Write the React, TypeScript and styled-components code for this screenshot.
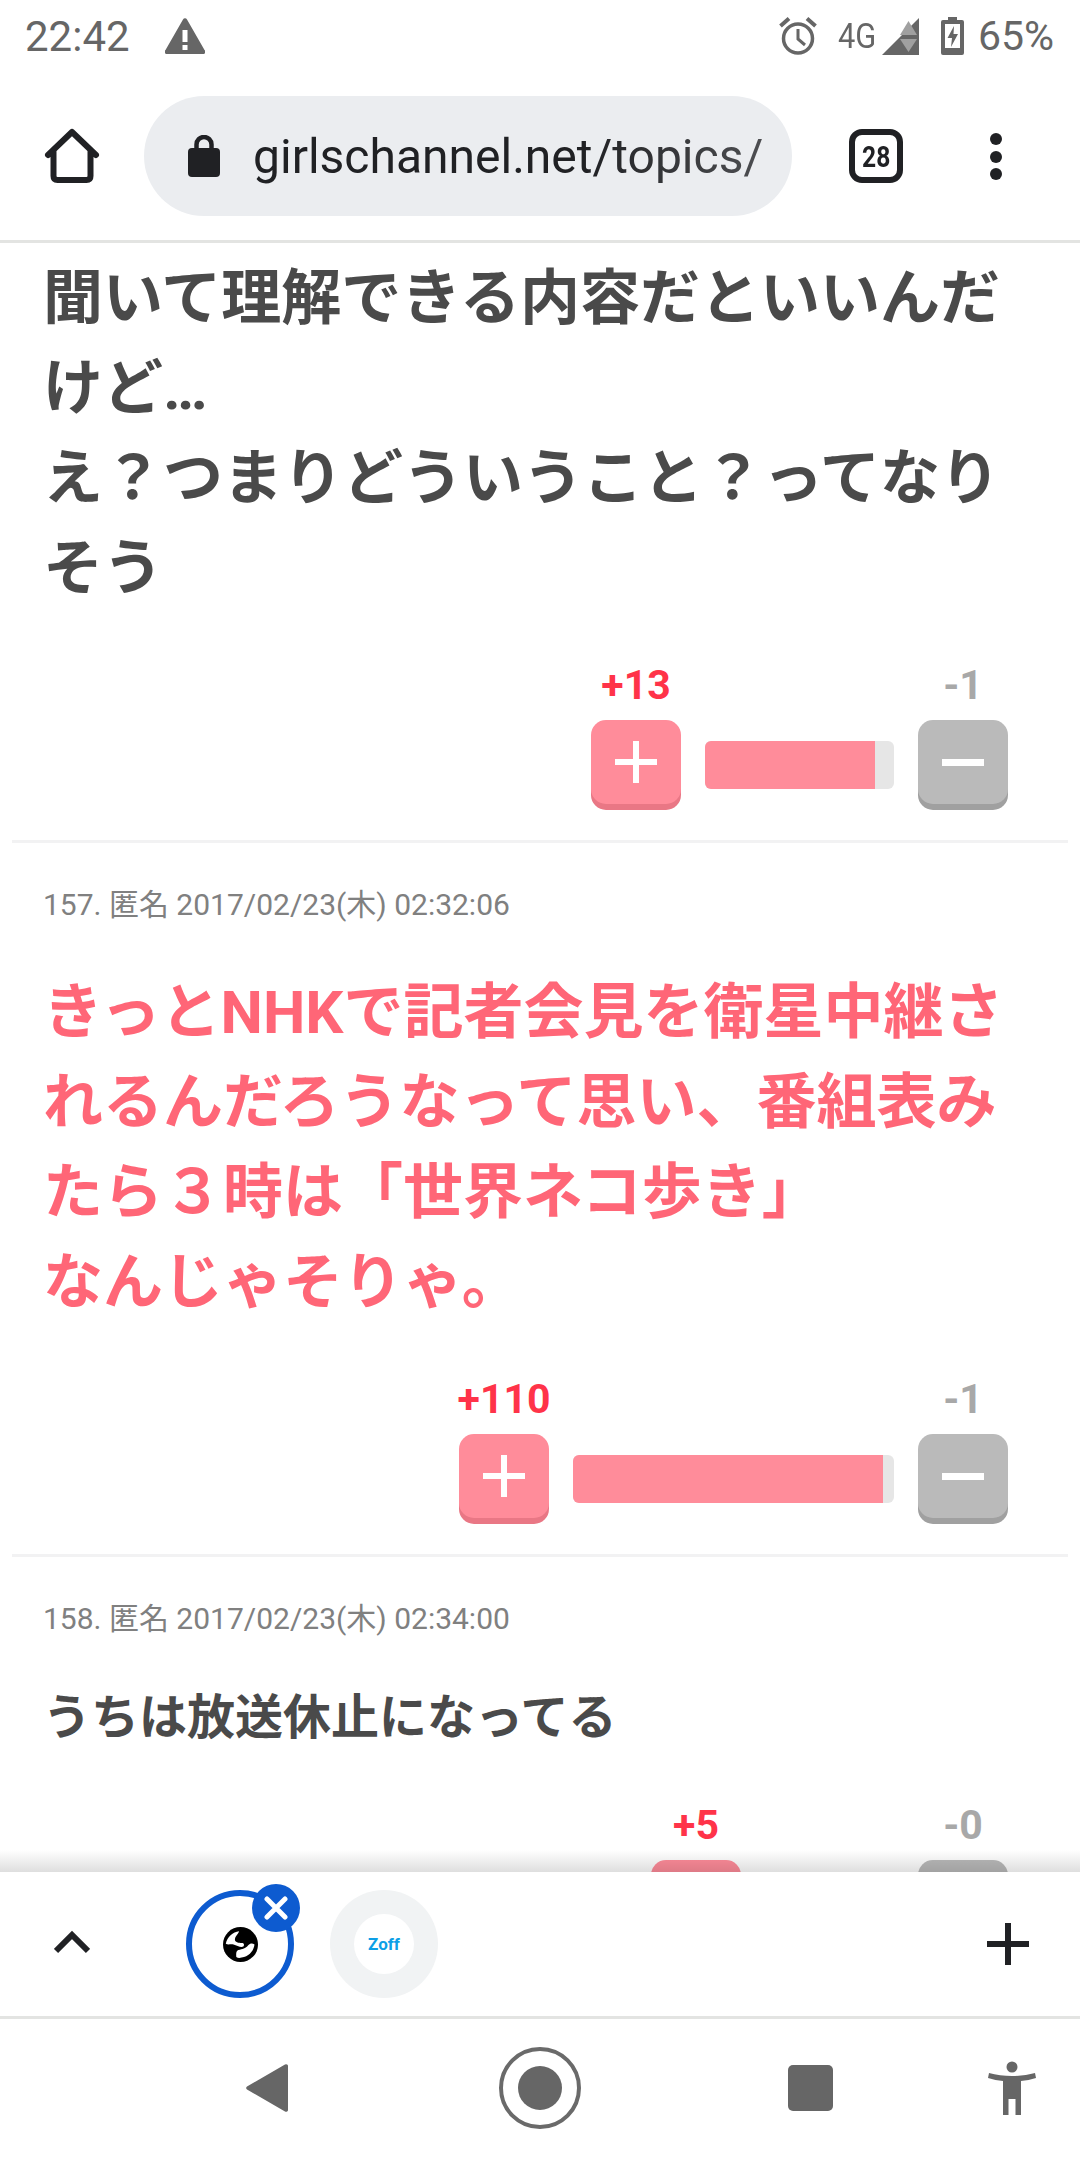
import React from "react";
import styled, { createGlobalStyle } from "styled-components";

const GlobalStyle = createGlobalStyle`
  html, body {
    margin: 0;
    padding: 0;
    background: #fff;
  }
  * {
    box-sizing: border-box;
  }
`;

const JP = `Roboto, "Noto Sans CJK JP", sans-serif`;

const StatusIcons = () => (
  <StatusRight>
    <svg width="38" height="40" viewBox="0 0 38 40" fill="none" stroke="#666">
      <circle cx="19" cy="22.500" r="14.500" strokeWidth="3.500" />
      <path d="M19 13v10l7 6" strokeWidth="3" />
      <path d="M1.500 10 10 2.500M36.500 10 28 2.500" strokeWidth="4" />
    </svg>
    <Net>4G</Net>
    <svg width="37" height="37" viewBox="0 0 37 37">
      <path d="M37 0V37H0Z" fill="#666" />
      <path d="M26.500 3 35 17H18Z" fill="#a0a0a0" />
      <path d="M18 21H35L26.500 34Z" fill="#a0a0a0" />
    </svg>
    <BatteryIcon width="23" height="38" viewBox="0 0 23 38">
      <path d="M7 0h9v3h5a2 2 0 0 1 2 2v31a2 2 0 0 1-2 2H2a2 2 0 0 1-2-2V5a2 2 0 0 1 2-2h5z" fill="#666" />
      <path d="M4 7h15v24H4z" fill="#fff" />
      <path d="M13 9 6.500 21H11l-1 9 7-13h-4.500z" fill="#666" />
    </BatteryIcon>
    <Battery>65%</Battery>
  </StatusRight>
);

const PlusGlyph = () => (
  <svg width="42" height="42" viewBox="0 0 42 42">
    <path d="M18 0h6v18h18v6H24v18h-6V24H0v-6h18z" fill="#fff" />
  </svg>
);

const MinusGlyph = () => (
  <svg width="42" height="42" viewBox="0 0 42 42">
    <path d="M0 18h42v7H0z" fill="#fff" />
  </svg>
);

interface VotesProps {
  plus: number;
  minus: number;
  barWidth: number;
  fill: number;
}

const Votes: React.FC<VotesProps> = ({ plus, minus, barWidth, fill }) => (
  <VoteRow>
    <VoteCol>
      <Count $plus>+{plus}</Count>
      <VoteButton $plus>
        <PlusGlyph />
      </VoteButton>
    </VoteCol>
    <Bar $width={barWidth}>
      <BarFill style={{ width: `${fill}%` }} />
    </Bar>
    <VoteCol>
      <Count>-{minus}</Count>
      <VoteButton>
        <MinusGlyph />
      </VoteButton>
    </VoteCol>
  </VoteRow>
);

export default function App() {
  return (
    <Page>
      <GlobalStyle />
      <StatusBar>
        <StatusLeft>
          <Time>22:42</Time>
          <svg width="40" height="36" viewBox="0 0 40 36">
            <path d="M18 1.500a2.300 2.300 0 0 1 4 0L39.500 32a2.300 2.300 0 0 1-2 4h-35a2.300 2.300 0 0 1-2-4Z" fill="#666" />
            <path d="M17.500 12h5v12h-5zM17.500 27h5v5h-5z" fill="#fff" />
          </svg>
        </StatusLeft>
        <StatusIcons />
      </StatusBar>

      <Toolbar>
        <svg width="56" height="58" viewBox="0 0 56 58" fill="none" stroke="#202124" strokeWidth="6" strokeLinecap="round" strokeLinejoin="round">
          <path d="M4 28 28 5l24 23M9.500 24v25q0 4 4 4h29q4 0 4-4V24" />
        </svg>
        <UrlPill>
          <svg width="32" height="42" viewBox="0 0 32 42">
            <path d="M8.500 15V9.500a7.500 7.500 0 0 1 15 0V15" fill="none" stroke="#202124" strokeWidth="4.500" />
            <rect x="0" y="13" width="32" height="29" rx="4" fill="#202124" />
          </svg>
          <UrlText>girlschannel.net/topics/</UrlText>
        </UrlPill>
        <TabCount>
          <span>28</span>
        </TabCount>
        <MenuDots>
          <i />
          <i />
          <i />
        </MenuDots>
      </Toolbar>

      <Content>
        <Comment $first>
          <Body>
            聞いて理解できる内容だといいんだけど…
            <br />
            え？つまりどういうこと？ってなりそう
          </Body>
          <Votes plus={13} minus={1} barWidth={189} fill={90} />
        </Comment>
        <Comment>
          <Meta>157. 匿名 2017/02/23(木) 02:32:06</Meta>
          <Body $hot>
            きっとNHKで記者会見を衛星中継されるんだろうなって思い、番組表みたら３時は「世界ネコ歩き」
            <br />
            なんじゃそりゃ。
          </Body>
          <Votes plus={110} minus={1} barWidth={321} fill={96.5} />
        </Comment>
        <Comment>
          <Meta>158. 匿名 2017/02/23(木) 02:34:00</Meta>
          <Body $small>うちは放送休止になってる</Body>
          <Votes plus={5} minus={0} barWidth={129} fill={100} />
        </Comment>
      </Content>

      <TabStrip>
        <svg width="36" height="24" viewBox="0 0 36 24" fill="none" stroke="#202124" strokeWidth="6">
          <path d="M2 21 18 5l16 16" />
        </svg>
        <ActiveTab>
          <svg width="35" height="35" viewBox="0 0 100 100">
            <circle cx="50" cy="50" r="50" fill="#000" />
            <path
              d="M8 48C12 28 28 14 46 12 44 20 34 26 34 36 34 44 44 46 54 46 60 46 62 52 58 56 50 60 40 52 30 50 22 48 14 52 8 48Z"
              fill="#fff"
            />
            <path
              d="M38 86C38 78 36 70 44 66 56 62 64 62 72 52 78 46 84 46 90 50 88 66 78 80 60 86 52 88 44 90 38 86Z"
              fill="#fff"
            />
          </svg>
          <CloseBadge>
            <svg width="24" height="24" viewBox="0 0 24 24" fill="none" stroke="#fff" strokeWidth="5" strokeLinecap="round">
              <path d="M3 3l18 18M21 3 3 21" />
            </svg>
          </CloseBadge>
        </ActiveTab>
        <IdleTab>
          <Favicon>Zoff</Favicon>
        </IdleTab>
        <AddTab>
          <svg width="42" height="42" viewBox="0 0 42 42">
            <path d="M18 0h6v18h18v6H24v18h-6V24H0v-6h18z" fill="#202124" />
          </svg>
        </AddTab>
      </TabStrip>

      <NavBar>
        <svg width="42" height="48" viewBox="0 0 42 48">
          <path d="M39 .500a2 2 0 0 1 3 2v43a2 2 0 0 1-3 2L1 25.500a2 2 0 0 1 0-3z" fill="#666" />
        </svg>
        <HomeRing>
          <i />
        </HomeRing>
        <NavSquare />
        <A11yIcon width="48" height="54" viewBox="0 0 48 54">
          <circle cx="24" cy="6" r="5.500" fill="#666" />
          <path
            d="M1 12c7 2 15 3 23 3s16-1 23-3l1 5c-5 1.500-10 2.500-15 3v34h-5.500V38h-7v16H15V20c-5-.5-10-1.500-15-3z"
            fill="#666"
          />
        </A11yIcon>
      </NavBar>
    </Page>
  );
}

const Page = styled.div`
  width: 1080px;
  height: 2160px;
  display: flex;
  flex-direction: column;
  overflow: hidden;
  background: #fff;
  font-family: ${JP};
`;

const StatusBar = styled.div`
  height: 72px;
  padding: 0 26px 0 25px;
  display: flex;
  align-items: center;
  justify-content: space-between;
  color: #666;
`;

const StatusLeft = styled.div`
  display: flex;
  align-items: center;
  gap: 35px;
`;

const Time = styled.span`
  font-size: 42px;
`;

const StatusRight = styled.div`
  display: flex;
  align-items: center;
`;

const Net = styled.span`
  width: 38px;
  margin: 0 6px 0 21px;
  font-size: 35px;
  transform: scaleX(0.88);
  transform-origin: left;
`;

const BatteryIcon = styled.svg`
  margin-left: 22px;
`;

const Battery = styled.span`
  font-size: 41px;
  margin-left: 14px;
`;

const Toolbar = styled.div`
  height: 171px;
  padding: 24px 0 0 44px;
  display: flex;
  align-items: flex-start;
  border-bottom: 3px solid #e3e4e2;

  & > svg {
    margin-top: 31px;
    flex: none;
  }
`;

const UrlPill = styled.div`
  width: 648px;
  height: 120px;
  margin-left: 44px;
  padding-left: 44px;
  border-radius: 60px;
  background: #ebedf0;
  display: flex;
  align-items: center;
  gap: 33px;
  flex: none;

  svg {
    flex: none;
  }
`;

const UrlText = styled.span`
  font-size: 48px;
  color: #202124;
  white-space: nowrap;
  mask-image: linear-gradient(90deg, #000 65%, rgba(0, 0, 0, 0.78) 100%);
`;

const TabCount = styled.div`
  width: 54px;
  height: 54px;
  margin: 33px 0 0 57px;
  border: 6px solid #202124;
  border-radius: 13px;
  display: flex;
  align-items: center;
  justify-content: center;
  font-size: 30px;
  font-weight: 700;
  color: #202124;

  span {
    transform: scaleX(0.82);
  }
`;

const MenuDots = styled.div`
  margin: 37px 0 0 87px;
  height: 47px;
  display: flex;
  flex-direction: column;
  justify-content: space-between;

  i {
    display: block;
    width: 12px;
    height: 12px;
    border-radius: 50%;
    background: #202124;
  }
`;

const Content = styled.div`
  flex: 1;
  min-height: 0;
  overflow: hidden;
  padding-top: 9px;
`;

const Comment = styled.section<{ $first?: boolean }>`
  margin: 0 12px;
  padding: 0 0 30px 31px;
  border-top: ${(p) => (p.$first ? "none" : "3px solid #f2f2f3")};
`;

const Meta = styled.div`
  height: 123px;
  padding-top: 44px;
  font-size: 30px;
  line-height: 36px;
  color: #808080;
`;

const Body = styled.div<{ $hot?: boolean; $small?: boolean }>`
  width: 994px;
  padding-top: 2px;
  font-size: ${(p) => (p.$small ? "48px" : "60px")};
  line-height: ${(p) => (p.$small ? "72px" : "90px")};
  font-weight: 700;
  color: ${(p) => (p.$hot ? "#ff6677" : "#4a4a4a")};
`;

const VoteRow = styled.div`
  display: flex;
  justify-content: flex-end;
  align-items: flex-end;
  gap: 24px;
  margin-top: 52px;
  margin-right: 60px;
`;

const VoteCol = styled.div`
  width: 90px;
  display: flex;
  flex-direction: column;
  align-items: center;
`;

const Count = styled.div<{ $plus?: boolean }>`
  height: 54px;
  font-size: 41px;
  line-height: 38px;
  font-weight: 700;
  white-space: nowrap;
  color: ${(p) => (p.$plus ? "#ff3349" : "#a8a8a8")};
`;

const VoteButton = styled.div<{ $plus?: boolean }>`
  width: 90px;
  height: 84px;
  margin-bottom: 6px;
  border-radius: 15px;
  display: flex;
  align-items: center;
  justify-content: center;
  background: ${(p) => (p.$plus ? "#ff8c9a" : "#bababa")};
  box-shadow: 0 6px 0 ${(p) => (p.$plus ? "#e97785" : "#a0a0a0")};
`;

const Bar = styled.div<{ $width: number }>`
  width: ${(p) => p.$width}px;
  height: 48px;
  margin-bottom: 21px;
  border-radius: 6px;
  overflow: hidden;
  background: #e6e6e6;
`;

const BarFill = styled.div`
  height: 100%;
  background: #ff8c9a;
`;

const TabStrip = styled.div`
  position: relative;
  height: 147px;
  padding: 18px 0 0 54px;
  display: flex;
  align-items: flex-start;
  background: #fff;
  border-bottom: 3px solid #e3e4e2;

  &::before {
    content: "";
    position: absolute;
    left: 0;
    right: 0;
    top: -22px;
    height: 22px;
    background: linear-gradient(rgba(0, 0, 0, 0), rgba(0, 0, 0, 0.13));
  }

  & > svg {
    margin-top: 40px;
    flex: none;
  }
`;

const ActiveTab = styled.div`
  position: relative;
  width: 108px;
  height: 108px;
  margin-left: 96px;
  border: 6px solid #0d5bd0;
  border-radius: 50%;
  display: flex;
  align-items: center;
  justify-content: center;
  flex: none;
`;

const CloseBadge = styled.div`
  position: absolute;
  top: -12px;
  right: -12px;
  width: 48px;
  height: 48px;
  border-radius: 50%;
  background: #0d5bd0;
  display: flex;
  align-items: center;
  justify-content: center;
`;

const IdleTab = styled.div`
  width: 108px;
  height: 108px;
  margin-left: 36px;
  border-radius: 50%;
  background: #f1f3f4;
  display: flex;
  align-items: center;
  justify-content: center;
  flex: none;
`;

const Favicon = styled.div`
  width: 60px;
  height: 60px;
  border-radius: 50%;
  background: #fff;
  display: flex;
  align-items: center;
  justify-content: center;
  font-size: 17px;
  font-weight: 700;
  color: #0d9fe6;
`;

const AddTab = styled.div`
  margin: 33px 0 0 549px;
  height: 42px;
`;

const NavBar = styled.div`
  height: 141px;
  padding: 0 0 4px 246px;
  display: flex;
  align-items: center;
`;

const HomeRing = styled.div`
  width: 82px;
  height: 82px;
  margin-left: 211px;
  border: 4px solid #6a6a6a;
  border-radius: 50%;
  display: flex;
  align-items: center;
  justify-content: center;

  i {
    display: block;
    width: 44px;
    height: 44px;
    border-radius: 50%;
    background: #666;
  }
`;

const NavSquare = styled.div`
  width: 45px;
  height: 46px;
  margin-left: 207px;
  border-radius: 5px;
  background: #666;
`;

const A11yIcon = styled.svg`
  margin-left: 155px;
`;
